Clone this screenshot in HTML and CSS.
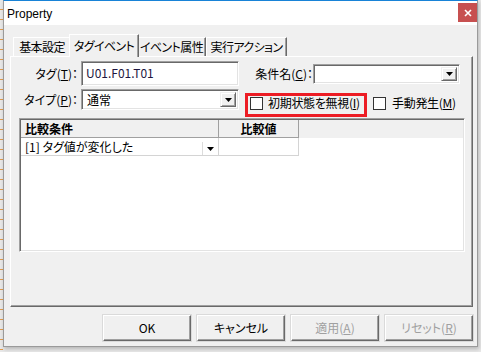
FILE: index.html
```html
<!DOCTYPE html>
<html lang="ja">
<head>
<meta charset="utf-8">
<title>Property</title>
<link rel="stylesheet" href="styles.css">
</head>
<body>
<div class="desk">
  <div class="edge"></div>
  <div class="win">
    <div class="titlebar">
      <span class="title">Property</span>
      <span class="close"><svg width="8" height="8" viewBox="0 0 8 8"><path d="M1 1L7 7M7 1L1 7" stroke="#fff" stroke-width="1.6"/></svg></span>
    </div>
    <div class="client">
      <div class="tabs">
        <div class="tab t1">基本設定</div>
        <div class="tab t2 active">タグイベント</div>
        <div class="tab t3">イベント属性</div>
        <div class="tab t4">実行アクション</div>
      </div>
      <div class="panel">
        <div class="row r1">
          <span class="lbl">タグ(<u>T</u>)：</span>
          <div class="field input">U01.F01.T01</div>
          <span class="lbl lbl2">条件名(<u>C</u>)：</span>
          <div class="field combo cname"><span class="val"></span><span class="dd"><svg width="7" height="4" viewBox="0 0 7 4"><polygon points="0,0 7,0 3.5,4" fill="#000"/></svg></span></div>
        </div>
        <div class="row r2">
          <span class="lbl">タイプ(<u>P</u>)：</span>
          <div class="field combo ctype"><span class="val">通常</span><span class="dd"><svg width="7" height="4" viewBox="0 0 7 4"><polygon points="0,0 7,0 3.5,4" fill="#000"/></svg></span></div>
          <div class="mark">
            <span class="chk"></span><span class="ctext">初期状態を無視(<u>I</u>)</span>
          </div>
          <div class="chk2">
            <span class="chk"></span><span class="ctext">手動発生(<u>M</u>)</span>
          </div>
        </div>
        <div class="list">
          <div class="lhead">
            <div class="hc hc1">比較条件</div>
            <div class="hc hc2">比較値</div>
          </div>
          <div class="lrow">
            <div class="cell cell1"><span>[1] タグ値が変化した</span><span class="mini"><svg width="7" height="4" viewBox="0 0 7 4"><polygon points="0,0 7,0 3.5,4" fill="#000"/></svg></span></div>
            <div class="cell cell2"></div>
          </div>
        </div>
      </div>
      <div class="buttons">
        <div class="btn">OK</div>
        <div class="btn">キャンセル</div>
        <div class="btn disabled">適用(<u>A</u>)</div>
        <div class="btn disabled">リセット(<u>R</u>)</div>
      </div>
    </div>
  </div>
</div>
</body>
</html>
```

FILE: styles.css
```css
* { box-sizing: border-box; }
html, body { margin: 0; padding: 0; }
body {
  width: 481px;
  height: 352px;
  overflow: hidden;
  background: #e8e8e8;
  font-family: "Noto Sans CJK JP", "Noto Sans", sans-serif;
  font-size: 12px;
  line-height: 16px;
  color: #000;
  font-feature-settings: "palt";
}
u { text-decoration: underline; text-underline-offset: 1px; }

.desk { display: flex; height: 352px; }
.edge {
  width: 3px;
  height: 352px;
  background: repeating-linear-gradient(to bottom, #e8e8e8 0 9px, #e39a4a 9px 10px);
}
.win {
  width: 475px;
  height: 347px;
  background: #f0f0f0;
  border: 1px solid #9a9a9a;
  border-top: 1px solid #1883d7;
  box-shadow: 1px 2px 4px rgba(0,0,0,0.22);
  display: flex;
  flex-direction: column;
}
.titlebar {
  height: 24px;
  background: #fff;
  display: flex;
  align-items: flex-start;
  justify-content: space-between;
}
.title {
  font-family: "Liberation Sans", sans-serif;
  font-size: 12px;
  padding-left: 3px;
  margin-top: 5px;
  color: #000;
}
.close {
  width: 19px;
  height: 19px;
  margin-top: 2px;
  background: #c75050;
  display: flex;
  align-items: center;
  justify-content: center;
}

.client { padding: 0 6px; display: flex; flex-direction: column; }

.tabs {
  margin-top: 9px;
  height: 22px;
  padding-left: 3px;
  display: flex;
  align-items: flex-end;
  position: relative;
  z-index: 1;
}
.tab {
  height: 19px;
  border-top: 1px solid #fff;
  border-left: 1px solid #fff;
  border-right: 1px solid #696969;
  box-shadow: inset -1px 0 #a0a0a0;
  text-align: center;
  padding-top: 1px;
  white-space: nowrap;
  letter-spacing: -0.6px;
  overflow: hidden;
}
.t1 { width: 58px; }
.t2 { width: 70px; }
.t3 { width: 69px; }
.t4 { width: 81px; }
.tab.active {
  height: 23px;
  margin: 0 -2px -1px -2px;
  padding-top: 3px;
  background: #f0f0f0;
  position: relative;
  z-index: 2;
}

.panel {
  width: 463px;
  height: 251px;
  border-top: 1px solid #fff;
  border-left: 1px solid #fff;
  border-right: 1px solid #696969;
  border-bottom: 1px solid #696969;
  box-shadow: inset -1px -1px #a0a0a0;
  display: flex;
  flex-direction: column;
}

.row { display: flex; }
.r1 { margin-top: 4px; height: 25px; align-items: center; }
.r2 { margin-top: 3px; height: 21px; align-items: flex-start; }

.lbl {
  width: 67px;
  text-align: right;
  white-space: nowrap;
}
.r2 .lbl { line-height: 21px; }
.lbl2 { width: 63px; margin-left: 11px; }

.field {
  background: #fff;
  border-top: 1px solid #a0a0a0;
  border-left: 1px solid #a0a0a0;
  border-right: 1px solid #fff;
  border-bottom: 1px solid #fff;
  box-shadow: inset 1px 1px #696969, inset -1px -1px #e3e3e3;
}
.input {
  width: 158px;
  height: 25px;
  margin-left: 3px;
  padding: 3px 0 0 4px;
  color: #1d1640;
}
.combo {
  display: flex;
  justify-content: space-between;
  padding: 2px;
}
.cname { width: 147px; height: 20px; }
.ctype { width: 158px; height: 21px; margin-left: 3px; }
.combo .val { padding-left: 3px; line-height: 16px; }
.dd {
  width: 16px;
  height: 100%;
  background: #f0f0f0;
  border-top: 1px solid #f0f0f0;
  border-left: 1px solid #f0f0f0;
  border-right: 1px solid #696969;
  border-bottom: 1px solid #696969;
  box-shadow: inset 1px 1px #fff, inset -1px -1px #a0a0a0;
  display: flex;
  align-items: center;
  justify-content: center;
}

.mark {
  width: 122px;
  height: 24px;
  margin-left: 6px;
  margin-top: 4px;
  border: 3px solid #ec1c24;
  display: flex;
  align-items: flex-start;
  padding: 1px 0 0 2px;
}
.chk {
  width: 13px;
  height: 13px;
  background: #fff;
  border: 1px solid #333;
  flex: none;
}
.ctext { margin-left: 5px; margin-top: -2px; white-space: nowrap; letter-spacing: -0.3px; }
.chk2 {
  margin-left: 6px;
  margin-top: 8px;
  display: flex;
  align-items: flex-start;
}
.chk2 .ctext { margin-left: 6px; }

.list {
  margin: 8px 0 0 8px;
  width: 446px;
  height: 134px;
  background: #fff;
  border-top: 1px solid #a0a0a0;
  border-left: 1px solid #a0a0a0;
  border-right: 1px solid #fff;
  border-bottom: 1px solid #fff;
  box-shadow: inset 1px 1px #696969, inset -1px -1px #e3e3e3;
  padding: 1px 1px 0 1px;
}
.lhead {
  height: 18px;
  background: #f0f0f0;
  display: flex;
}
.hc {
  height: 18px;
  font-weight: bold;
  border-right: 1px solid #a0a0a0;
  border-bottom: 1px solid #a0a0a0;
  line-height: 17px;
}
.hc1 { width: 198px; padding-left: 4px; }
.hc2 { width: 80px; text-align: center; }
.lrow { display: flex; height: 18px; }
.cell {
  height: 18px;
  border-right: 1px solid #d4d4d4;
  border-bottom: 1px solid #d4d4d4;
}
.cell1 {
  width: 198px;
  padding-left: 4px;
  display: flex;
  justify-content: space-between;
  align-items: flex-end;
  line-height: 17px;
}
.cell2 { width: 80px; }
.mini {
  width: 15px;
  height: 13px;
  margin-right: 1px;
  background: #fff;
  border-left: 1px solid #dcdcdc;
  display: flex;
  align-items: center;
  justify-content: center;
}

.buttons {
  margin-top: 8px;
  width: 463px;
  display: flex;
  justify-content: flex-end;
  gap: 6px;
}
.btn {
  width: 88px;
  height: 26px;
  background: #f0f0f0;
  border-top: 1px solid #fff;
  border-left: 1px solid #fff;
  border-right: 1px solid #696969;
  border-bottom: 1px solid #696969;
  box-shadow: inset -1px -1px #a0a0a0, 0 0 0 1px #dadada;
  text-align: center;
  line-height: 23px;
}
.btn.disabled { color: #a0a0a0; }
```
